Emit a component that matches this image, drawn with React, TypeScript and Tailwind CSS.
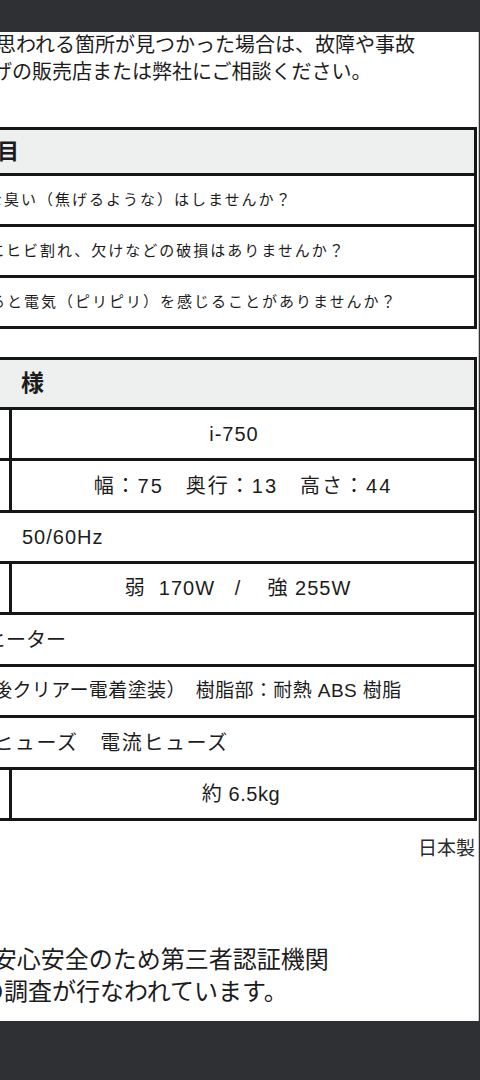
const FONT = "font-['Liberation_Sans','Noto_Sans_CJK_JP',sans-serif]"

const CHECKS = [
  { text: '変な臭い（焦げるような）はしませんか？', shift: '-ml-[30px]' },
  { text: '本体にヒビ割れ、欠けなどの破損はありませんか？', shift: '-ml-[45px]' },
  { text: '触れると電気（ピリピリ）を感じることがありませんか？', shift: '-ml-[44px]' },
]

type SpecRow =
  | { kind: 'split'; text: string; cls: string; h: string }
  | { kind: 'wide'; text: string; cls: string; h: string }

const SPECS: SpecRow[] = [
  { kind: 'split', text: 'i-750', cls: 'pr-[18px] tracking-[1px]', h: 'h-[48px]' },
  { kind: 'split', text: '幅：75　奥行：13　高さ：44', cls: 'tracking-[2px]', h: 'h-[49px]' },
  { kind: 'wide', text: '50/60Hz', cls: 'pl-[22px] tracking-[1px]', h: 'h-[48px]' },
  {
    kind: 'split',
    text: '弱\u00a0\u00a0170W\u00a0\u00a0\u00a0/\u00a0\u00a0\u00a0\u00a0強\u00a0255W',
    cls: 'pr-[10px] tracking-[1px]',
    h: 'h-[48px]',
  },
  { kind: 'wide', text: 'ヒーター', cls: '-ml-[14px]', h: 'h-[49px]' },
  { kind: 'wide', text: '後クリアー電着塗装）　樹脂部：耐熱 ABS 樹脂', cls: '-ml-[7px] text-[19px] tracking-[0.4px]', h: 'h-[48px]' },
  { kind: 'wide', text: '温度ヒューズ　電流ヒューズ', cls: '-ml-[50px] tracking-[1.6px]', h: 'h-[49px]' },
  { kind: 'split', text: '約 6.5kg', cls: 'pr-[4px] tracking-[0.6px]', h: 'h-[48px]' },
]

export default function App() {
  return (
    <div className={`flex h-[1080px] w-[480px] flex-col overflow-hidden bg-[#2f3034] text-[#1c1c1c] ${FONT}`}>
      {/* top viewer bar */}
      <div className="h-[32px] shrink-0" />

      {/* page sheet */}
      <div className="flex h-[989px] w-[479px] shrink-0 flex-col overflow-hidden border-r border-[#c9c9c9] bg-white">
        <p className="whitespace-nowrap text-[20px] leading-[27px]">
          <span className="-ml-[64px] block">異常と思われる箇所が見つかった場合は、故障や事故</span>
          <span className="-ml-[88px] block">お買い上げの販売店または弊社にご相談ください。</span>
        </p>

        {/* check table */}
        <div className="mt-[41px] w-[477px] border-y-[3px] border-r-[3px] border-[#161616]">
          <div className="flex h-[43px] items-center whitespace-nowrap bg-[#eeefef] text-[22px] font-bold">
            <span className="-ml-[25px]">項目</span>
          </div>
          {CHECKS.map(row => (
            <div
              key={row.text}
              className="flex h-[51px] items-center whitespace-nowrap border-t-[3px] border-[#161616] text-[15px] tracking-[2px]"
            >
              <span className={row.shift}>{row.text}</span>
            </div>
          ))}
        </div>

        {/* spec table */}
        <div className="mt-[28px] w-[477px] border-y-[3px] border-r-[3px] border-[#161616]">
          <div className="flex h-[47px] items-center whitespace-nowrap bg-[#eeefef] text-[23px] font-bold">
            <span className="-ml-[25px]">仕　様</span>
          </div>
          {SPECS.map(row =>
            row.kind === 'split' ? (
              <div key={row.text} className={`flex ${row.h} box-content border-t-[3px] border-[#161616]`}>
                <div className="w-[9px] shrink-0" />
                <div
                  className={`flex flex-1 items-center justify-center whitespace-pre border-l-[3px] border-[#161616] text-[20px] ${row.cls}`}
                >
                  {row.text}
                </div>
              </div>
            ) : (
              <div
                key={row.text}
                className={`flex ${row.h} box-content items-center whitespace-pre border-t-[3px] border-[#161616] text-[20px]`}
              >
                <span className={row.cls}>{row.text}</span>
              </div>
            ),
          )}
        </div>

        <div className="mt-[16px] pr-[3px] text-right text-[19px] leading-[24px] text-[#2a2a2a]">日本製</div>

        <p className="mt-[83px] whitespace-nowrap text-[24px] leading-[32px]">
          <span className="-ml-[54px] block">て、安心安全のため第三者認証機関</span>
          <span className="-ml-[20px] block">の調査が行なわれています。</span>
        </p>
      </div>
    </div>
  )
}
